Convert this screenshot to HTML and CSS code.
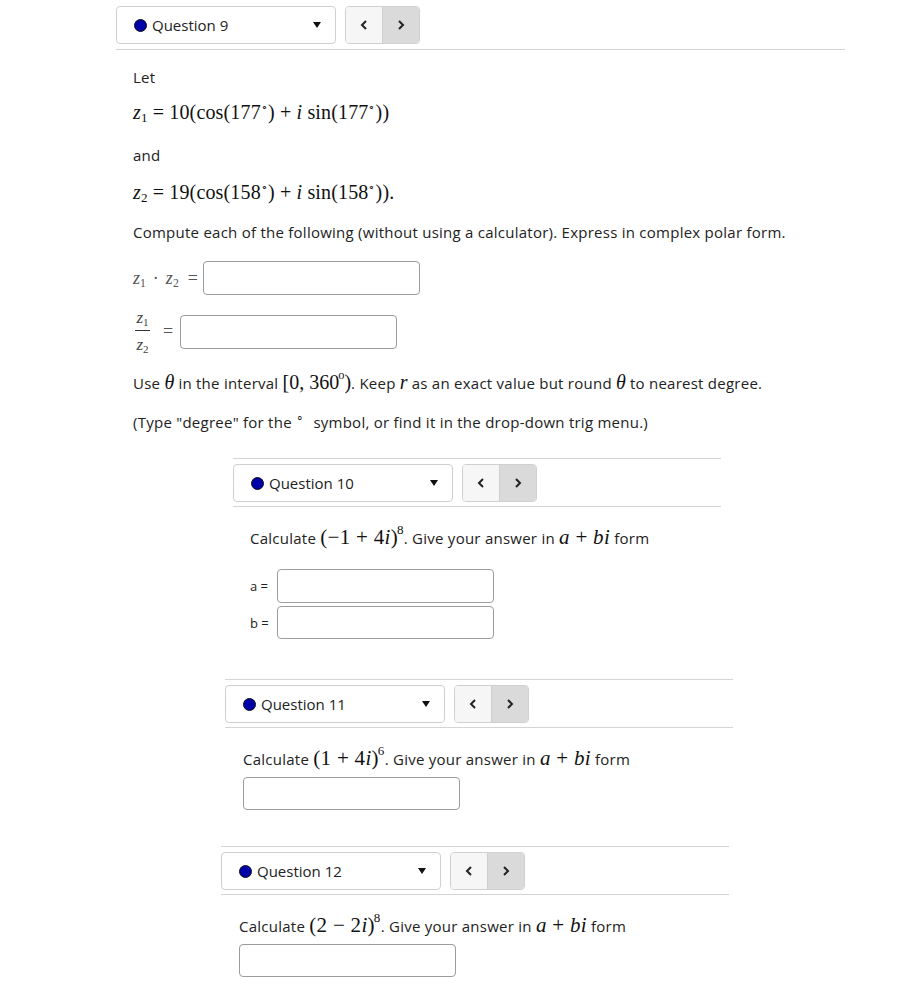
FILE: index.html
```html
<!DOCTYPE html>
<html>
<head>
<meta charset="utf-8">
<link rel="stylesheet" href="styles.css">
</head>
<body>
<div class="page">
  <section class="q q9">
    <div class="qhead">
      <div class="select"><span class="dot"></span><span class="qlabel">Question 9</span><span class="caret"></span></div>
      <div class="nav">
        <span class="btn prev"><svg width="8" height="10" viewBox="0 0 8 10"><path d="M6 1 L2 5 L6 9" fill="none" stroke="#222" stroke-width="2"/></svg></span>
        <span class="btn next"><svg width="8" height="10" viewBox="0 0 8 10"><path d="M2 1 L6 5 L2 9" fill="none" stroke="#222" stroke-width="2"/></svg></span>
      </div>
    </div>
    <div class="qbody">
      <p class="t let">Let</p>
      <p class="m z1"><i>z</i><sub>1</sub> = 10(cos(177<sup>∘</sup>) + <i>i</i> sin(177<sup>∘</sup>))</p>
      <p class="t and">and</p>
      <p class="m z2"><i>z</i><sub>2</sub> = 19(cos(158<sup>∘</sup>) + <i>i</i> sin(158<sup>∘</sup>)).</p>
      <p class="t compute">Compute each of the following (without using a calculator). Express in complex polar form.</p>
      <div class="row prod"><span class="ml"><i>z</i><sub>1</sub><span class="cdot">·</span><i>z</i><sub>2</sub><span class="eqs">=</span></span><span class="input"></span></div>
      <div class="row quot"><span class="frac"><span class="num"><i>z</i><sub>1</sub></span><span class="den"><i>z</i><sub>2</sub></span></span><span class="ml eq">=</span><span class="input"></span></div>
      <p class="t use">Use <i class="mi">θ</i> in the interval <span class="mm">[0, 360<sup>o</sup>)</span>. Keep <i class="mi">r</i> as an exact value but round <i class="mi">θ</i> to nearest degree.</p>
      <p class="t type">(Type "degree" for the <sup class="deg">∘</sup> symbol, or find it in the drop-down trig menu.)</p>
    </div>
  </section>

  <section class="q q10">
    <div class="qhead">
      <div class="select"><span class="dot"></span><span class="qlabel">Question 10</span><span class="caret"></span></div>
      <div class="nav">
        <span class="btn prev"><svg width="8" height="10" viewBox="0 0 8 10"><path d="M6 1 L2 5 L6 9" fill="none" stroke="#222" stroke-width="2"/></svg></span>
        <span class="btn next"><svg width="8" height="10" viewBox="0 0 8 10"><path d="M2 1 L6 5 L2 9" fill="none" stroke="#222" stroke-width="2"/></svg></span>
      </div>
    </div>
    <div class="qbody">
      <p class="t calc">Calculate <span class="mm">(−1 + 4<i>i</i>)<sup>8</sup></span>. Give your answer in <span class="mm"><i>a</i> + <i>bi</i></span> form</p>
      <div class="ab">
        <div class="abrow"><span class="lab">a =</span><span class="input"></span></div>
        <div class="abrow"><span class="lab">b =</span><span class="input short"></span></div>
      </div>
    </div>
  </section>

  <section class="q q11">
    <div class="qhead">
      <div class="select"><span class="dot"></span><span class="qlabel">Question 11</span><span class="caret"></span></div>
      <div class="nav">
        <span class="btn prev"><svg width="8" height="10" viewBox="0 0 8 10"><path d="M6 1 L2 5 L6 9" fill="none" stroke="#222" stroke-width="2"/></svg></span>
        <span class="btn next"><svg width="8" height="10" viewBox="0 0 8 10"><path d="M2 1 L6 5 L2 9" fill="none" stroke="#222" stroke-width="2"/></svg></span>
      </div>
    </div>
    <div class="qbody">
      <p class="t calc">Calculate <span class="mm">(1 + 4<i>i</i>)<sup>6</sup></span>. Give your answer in <span class="mm"><i>a</i> + <i>bi</i></span> form</p>
      <span class="input single"></span>
    </div>
  </section>

  <section class="q q12">
    <div class="qhead">
      <div class="select"><span class="dot"></span><span class="qlabel">Question 12</span><span class="caret"></span></div>
      <div class="nav">
        <span class="btn prev"><svg width="8" height="10" viewBox="0 0 8 10"><path d="M6 1 L2 5 L6 9" fill="none" stroke="#222" stroke-width="2"/></svg></span>
        <span class="btn next"><svg width="8" height="10" viewBox="0 0 8 10"><path d="M2 1 L6 5 L2 9" fill="none" stroke="#222" stroke-width="2"/></svg></span>
      </div>
    </div>
    <div class="qbody">
      <p class="t calc">Calculate <span class="mm">(2 − 2<i>i</i>)<sup>8</sup></span>. Give your answer in <span class="mm"><i>a</i> + <i>bi</i></span> form</p>
      <span class="input single"></span>
    </div>
  </section>
</div>
</body>
</html>
```

FILE: styles.css
```css
html, body {
  margin: 0;
  padding: 0;
  background: #ffffff;
}
body {
  font-family: "Open Sans", "Noto Sans", sans-serif;
  font-size: 15px;
  letter-spacing: 0.25px;
  color: #222;
}
.page {
  padding-top: 6px;
  display: flex;
  flex-direction: column;
}
p { margin: 0; }

.q { display: flex; flex-direction: column; }
.q9 { margin-left: 116px; width: 729px; }
.q10 { margin-left: 233px; width: 488px; margin-top: 26px; border-top: 1px solid #d4d4d4; }
.q11 { margin-left: 225px; width: 508px; margin-top: 40px; border-top: 1px solid #d4d4d4; }
.q12 { margin-left: 221px; width: 508px; margin-top: 36px; border-top: 1px solid #d4d4d4; }

.qhead {
  display: flex;
  align-items: center;
  gap: 9px;
  padding-bottom: 5px;
  border-bottom: 1px solid #d4d4d4;
}
.q10 .qhead, .q11 .qhead, .q12 .qhead { padding-top: 5px; padding-bottom: 4px; }

.select {
  box-sizing: border-box;
  width: 220px;
  height: 38px;
  border: 1px solid #cfcfcf;
  border-radius: 4px;
  background: #fff;
  display: flex;
  align-items: center;
  padding: 0 0 0 17px;
}
.dot {
  width: 11px;
  height: 11px;
  border-radius: 50%;
  background: #0000a8;
  border: 1px solid #111;
  flex: none;
}
.qlabel {
  margin-left: 5px;
  font-size: 15px;
  letter-spacing: 0;
  color: #222;
  flex: 1;
}
.caret {
  width: 0;
  height: 0;
  border-left: 4px solid transparent;
  border-right: 4px solid transparent;
  border-top: 6px solid #111;
  margin-right: 14px;
}
.nav {
  display: flex;
  box-sizing: border-box;
  height: 38px;
  width: 75px;
  border: 1px solid #d0d0d0;
  border-radius: 4px;
  overflow: hidden;
}
.btn {
  flex: 1;
  display: flex;
  align-items: center;
  justify-content: center;
}
.prev { background: #f6f6f6; border-right: 1px solid #cfcfcf; }
.next { background: #dadada; }

.qbody { display: flex; flex-direction: column; padding-left: 17px; }
.q11 .qbody, .q12 .qbody { padding-left: 18px; }

.t { line-height: 20px; }
.m {
  font-family: "Liberation Serif", "Times New Roman", serif;
  font-size: 20px;
  letter-spacing: 0.15px;
  line-height: 24px;
  color: #111;
}
.m i, .ml i, .mm i, .frac i, .mi { font-family: "Liberation Serif", serif; font-style: italic; }
sub { font-size: 0.65em; vertical-align: -0.25em; line-height: 0; }
sup { font-size: 0.55em; vertical-align: 0.75em; line-height: 0; }

.let { margin-top: 17px; }
.z1 { margin-top: 13px; }
.and { margin-top: 21px; }
.z2 { margin-top: 15px; }
.compute { margin-top: 18px; }

.row { display: flex; align-items: center; }
.prod { margin-top: 19px; }
.quot { margin-top: 14px; }
.ml {
  font-family: "Liberation Serif", serif;
  font-size: 18px;
  color: #555;
  margin-right: 3px;
  letter-spacing: 0;
}
.cdot { margin: 0 7px; }
.eqs { margin-left: 9px; margin-right: 2px; }
.eq { margin: 0 7px 0 11px; }
.input {
  box-sizing: border-box;
  display: block;
  width: 217px;
  height: 34px;
  border: 1px solid #9c9c9c;
  border-radius: 4px;
  background: #fff;
}
.frac {
  display: inline-flex;
  flex-direction: column;
  align-items: center;
  font-family: "Liberation Serif", serif;
  font-size: 17px;
  color: #444;
  width: 19px;
  letter-spacing: 0;
}
.num { border-bottom: 1px solid #333; padding: 0 1px 3px; line-height: 18px; }
.den { padding-top: 5px; line-height: 18px; }

.use { margin-top: 18px; }
.type { margin-top: 19px; }
.mm, .mi {
  font-family: "Liberation Serif", serif;
  font-size: 20px;
  letter-spacing: 0;
  color: #111;
}
.calc .mm { font-size: 21px; letter-spacing: 0.3px; }
.mm sup { font-size: 0.62em; vertical-align: 0.8em; margin-left: -1px; }
.deg { font-size: 12px; vertical-align: 6px; margin-right: 5px; }

.calc { margin-top: 20px; }
.ab { display: flex; flex-direction: column; gap: 3px; margin-top: 21px; }
.abrow { display: flex; align-items: center; }
.lab { width: 27px; font-size: 13px; letter-spacing: 0; }
.input.short { height: 33px; }
.q11 .calc, .q12 .calc { margin-top: 20px; }
.single { margin-top: 8px; height: 33px; }
```
